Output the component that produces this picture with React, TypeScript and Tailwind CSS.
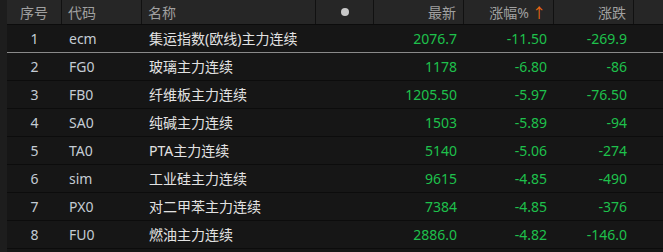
const rows = [
  { no: 1, code: "ecm", name: "集运指数(欧线)主力连续", last: "2076.7", pct: "-11.50", chg: "-269.9" },
  { no: 2, code: "FG0", name: "玻璃主力连续", last: "1178", pct: "-6.80", chg: "-86" },
  { no: 3, code: "FB0", name: "纤维板主力连续", last: "1205.50", pct: "-5.97", chg: "-76.50" },
  { no: 4, code: "SA0", name: "纯碱主力连续", last: "1503", pct: "-5.89", chg: "-94" },
  { no: 5, code: "TA0", name: "PTA主力连续", last: "5140", pct: "-5.06", chg: "-274" },
  { no: 6, code: "sim", name: "工业硅主力连续", last: "9615", pct: "-4.85", chg: "-490" },
  { no: 7, code: "PX0", name: "对二甲苯主力连续", last: "7384", pct: "-4.85", chg: "-376" },
  { no: 8, code: "FU0", name: "燃油主力连续", last: "2886.0", pct: "-4.82", chg: "-146.0" },
];

const font = { fontFamily: '"Noto Sans", "Noto Sans CJK SC", sans-serif' };

export default function App() {
  return (
    <div className="flex w-[663px] h-[252px] bg-[#161616] text-[14px] overflow-hidden" style={font}>
      {/* left gutter */}
      <div className="w-[7px] shrink-0 bg-[#1d1d1d]" />

      <div className="flex-1 flex flex-col">
        {/* Header */}
        <div className="flex h-[25px] bg-[#262626] border-b border-[#0c0c0c] text-[#a0a0a0]">
          <div className="w-[55px] border-r border-[#111] flex items-center justify-center">序号</div>
          <div className="w-[80px] border-r border-[#111] flex items-center pl-[6px]">代码</div>
          <div className="w-[174px] border-r border-[#111] flex items-center pl-[6px]">名称</div>
          <div className="w-[58px] border-r border-[#111] flex items-center justify-center">
            <span className="block w-[8px] h-[8px] rounded-full bg-[#c8c8c8]" />
          </div>
          <div className="w-[90px] border-r border-[#111] flex items-center justify-end pr-[7px]">最新</div>
          <div className="w-[90px] border-r border-[#111] flex items-center justify-end pr-[7px]">
            涨幅%<span className="ml-[3px] text-[#f06a12]">↑</span>
          </div>
          <div className="w-[80px] border-r border-[#111] flex items-center justify-end pr-[7px]">涨跌</div>
          <div className="flex-1" />
        </div>

        {/* Rows */}
        {rows.map((r, i) => (
          <div
            key={r.no}
            className={
              "flex h-[28px] items-center border-b " +
              (i === 0 ? "border-[#8a8a8a]" : "border-[#0c0c0c]")
            }
          >
            <div className="w-[55px] text-center text-[#c4ccd4]">{r.no}</div>
            <div className="w-[80px] pl-[7px] text-[#c4ccd4]">{r.code}</div>
            <div className="w-[174px] pl-[7px] text-[#e2e2e2] whitespace-nowrap">{r.name}</div>
            <div className="w-[58px]" />
            <div className="w-[90px] text-right pr-[7px] text-[#1ec14c]">{r.last}</div>
            <div className="w-[90px] text-right pr-[7px] text-[#1ec14c]">{r.pct}</div>
            <div className="w-[80px] text-right pr-[7px] text-[#1ec14c]">{r.chg}</div>
            <div className="flex-1" />
          </div>
        ))}
      </div>
    </div>
  );
}
